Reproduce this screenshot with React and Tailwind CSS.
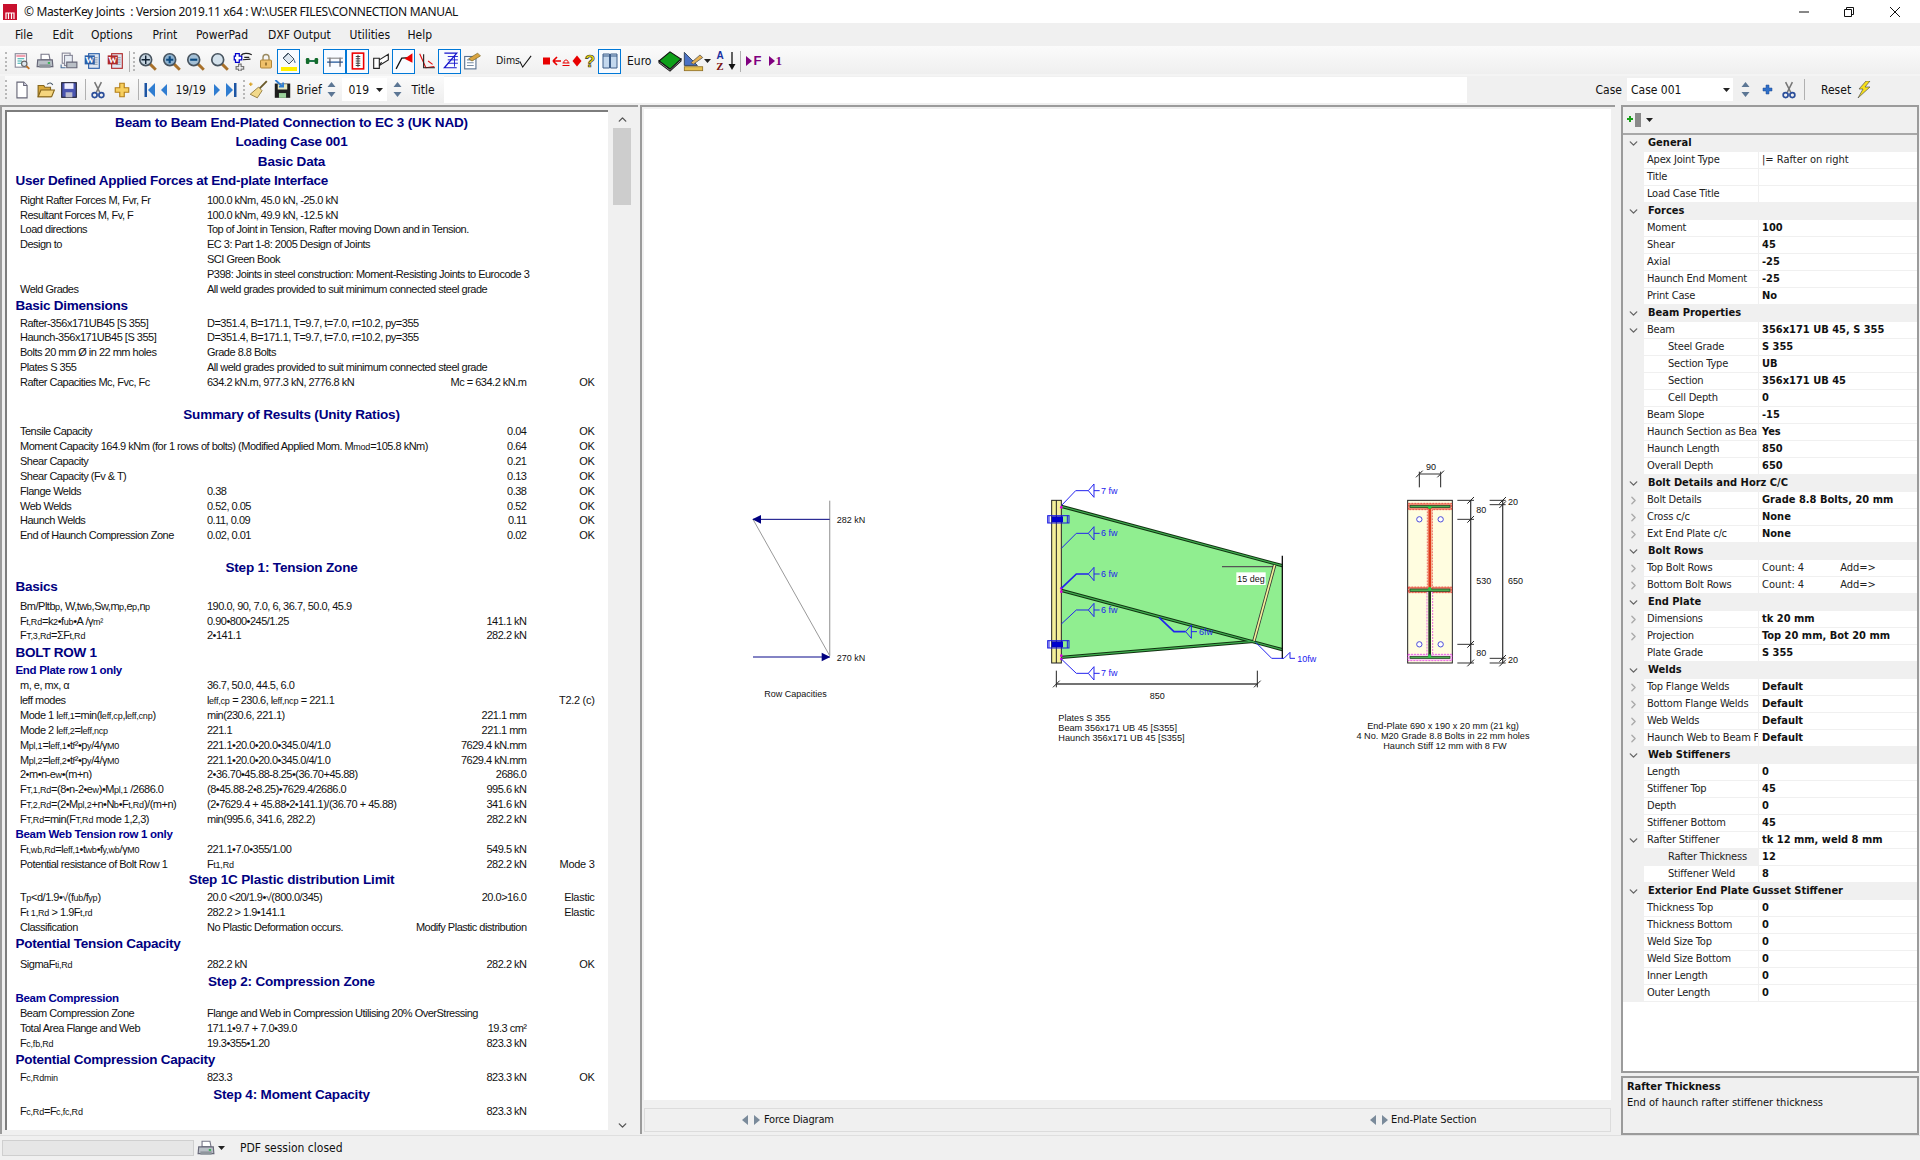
import { ChevronDown, ChevronRight, ChevronUp } from 'lucide-react';

const tahoma = "font-['DejaVu_Sans_Condensed','Noto_Sans',sans-serif]";
const arial = "font-['Liberation_Sans',Arial,sans-serif]";

// report rows: t centred title, h heading, s sub heading, r data row
const report = [
  ['t', 'Beam to Beam End-Plated Connection to EC 3 (UK NAD)'],
  ['t', 'Loading Case 001'],
  ['t', 'Basic Data'],
  ['h', 'User Defined Applied Forces at End-plate Interface'],
  ['r', 'Right Rafter Forces M, Fvr, Fr', '100.0 kNm, 45.0 kN, -25.0 kN', '', '', 'mt-[2px]'],
  ['r', 'Resultant Forces M, Fv, F', '100.0 kNm, 49.9 kN, -12.5 kN'],
  ['r', 'Load directions', 'Top of Joint in Tension, Rafter moving Down and in Tension.'],
  ['r', 'Design to', 'EC 3: Part 1-8: 2005 Design of Joints'],
  ['r', '', 'SCI Green Book'],
  ['r', '', 'P398: Joints in steel construction: Moment-Resisting Joints to Eurocode 3'],
  ['r', 'Weld Grades', 'All weld grades provided to suit minimum connected steel grade'],
  ['h', 'Basic Dimensions'],
  ['r', 'Rafter-356x171UB45 [S 355]', 'D=351.4, B=171.1, T=9.7, t=7.0, r=10.2, py=355'],
  ['r', 'Haunch-356x171UB45 [S 355]', 'D=351.4, B=171.1, T=9.7, t=7.0, r=10.2, py=355'],
  ['r', 'Bolts 20 mm Ø in 22 mm holes', 'Grade 8.8 Bolts'],
  ['r', 'Plates S 355', 'All weld grades provided to suit minimum connected steel grade'],
  ['r', 'Rafter Capacities Mc, Fvc, Fc', '634.2 kN.m,  977.3 kN,  2776.8 kN', 'Mc = 634.2 kN.m', 'OK'],
  ['t', 'Summary of Results (Unity Ratios)', 'mt-[15px]'],
  ['r', 'Tensile Capacity', '', '0.04', 'OK'],
  ['r', 'Moment Capacity 164.9 kNm (for 1 rows of bolts) (Modified Applied Mom.   M{mod}=105.8 kNm)', '', '0.64', 'OK'],
  ['r', 'Shear Capacity', '', '0.21', 'OK'],
  ['r', 'Shear Capacity (Fv & T)', '', '0.13', 'OK'],
  ['r', 'Flange Welds', '0.38', '0.38', 'OK'],
  ['r', 'Web Welds', '0.52, 0.05', '0.52', 'OK'],
  ['r', 'Haunch Welds', '0.11, 0.09', '0.11', 'OK'],
  ['r', 'End of Haunch Compression Zone', '0.02, 0.01', '0.02', 'OK'],
  ['t', 'Step 1: Tension Zone', 'mt-[15px]'],
  ['h', 'Basics'],
  ['r', 'Bm/Pltb{p}, W,tw{b},Sw,m{p},e{p},n{p}', '190.0, 90, 7.0, 6, 36.7, 50.0, 45.9', '', '', 'mt-[2px]'],
  ['r', 'F{t,Rd}=k{2}•f{ub}•A /γ{m²}', '0.90•800•245/1.25', '141.1 kN'],
  ['r', 'F{T,3,Rd}=ΣF{t,Rd}', '2•141.1', '282.2 kN'],
  ['h', 'BOLT ROW 1'],
  ['s', 'End Plate row 1 only', 'h-[16px]'],
  ['r', 'm, e, mx, α', '36.7, 50.0, 44.5, 6.0'],
  ['r', 'leff modes', 'l{eff,cp} = 230.6, l{eff,ncp} = 221.1', '', 'T2.2 (c)'],
  ['r', 'Mode 1 l{eff,1}=min(l{eff,cp},l{eff,cnp})', 'min(230.6, 221.1)', '221.1 mm'],
  ['r', 'Mode 2 l{eff,2}=l{eff,ncp}', '221.1', '221.1 mm'],
  ['r', 'M{pl,1}=l{eff,1}•t{f}²•p{y}/4/γ{M0}', '221.1•20.0•20.0•345.0/4/1.0', '7629.4 kN.mm'],
  ['r', 'M{pl,2}=l{eff,2}•t{f}²•p{y}/4/γ{M0}', '221.1•20.0•20.0•345.0/4/1.0', '7629.4 kN.mm'],
  ['r', '2•m•n-e{w}•(m+n)', '2•36.70•45.88-8.25•(36.70+45.88)', '2686.0'],
  ['r', 'F{T,1,Rd}=(8•n-2•e{w})•M{pl,1} /2686.0', '(8•45.88-2•8.25)•7629.4/2686.0', '995.6 kN'],
  ['r', 'F{T,2,Rd}=(2•M{pl,2}+n•N{b}•F{t,Rd})/(m+n)', '(2•7629.4 + 45.88•2•141.1)/(36.70 + 45.88)', '341.6 kN'],
  ['r', 'F{T,Rd}=min(F{T,Rd} mode 1,2,3)', 'min(995.6, 341.6, 282.2)', '282.2 kN'],
  ['s', 'Beam Web Tension row 1 only'],
  ['r', 'F{t,wb,Rd}=l{eff,1}•t{wb}•f{y,wb}/γ{M0}', '221.1•7.0•355/1.00', '549.5 kN'],
  ['r', 'Potential resistance of Bolt Row 1', 'F{t1,Rd}', '282.2 kN', 'Mode 3'],
  ['t', 'Step 1C Plastic distribution Limit', 'h-[18px]'],
  ['r', 'T{p}<d/1.9•√(f{ub}/f{yp})', '20.0 <20/1.9•√(800.0/345)', '20.0>16.0', 'Elastic', 'mt-[1px]'],
  ['r', 'F{t 1,Rd} > 1.9F{t,rd}', '282.2 > 1.9•141.1', '', 'Elastic'],
  ['r', 'Classification', 'No Plastic Deformation occurs.', 'Modify Plastic distribution'],
  ['h', 'Potential Tension Capacity'],
  ['r', 'SigmaF{ti,Rd}', '282.2 kN', '282.2 kN', 'OK', 'mt-[3px]'],
  ['t', 'Step 2: Compression Zone'],
  ['s', 'Beam Compression'],
  ['r', 'Beam Compression Zone', 'Flange and Web in Compression Utilising 20% OverStressing'],
  ['r', 'Total Area Flange and Web', '171.1•9.7 + 7.0•39.0', '19.3 cm²'],
  ['r', 'F{c,fb,Rd}', '19.3•355•1.20', '823.3 kN'],
  ['h', 'Potential Compression Capacity'],
  ['r', 'F{c,Rdmin}', '823.3', '823.3 kN', 'OK'],
  ['t', 'Step 4: Moment Capacity'],
  ['r', 'F{c,Rd}=F{c,fc,Rd}', '', '823.3 kN'],
];

// property grid rows: section / row, open = chevron state, sub = indented
const props = [
  { sec: 'General' },
  { l: 'Apex Joint Type', v: '|= Rafter on right', plain: true },
  { l: 'Title', v: '' },
  { l: 'Load Case Title', v: '' },
  { sec: 'Forces' },
  { l: 'Moment', v: '100' },
  { l: 'Shear', v: '45' },
  { l: 'Axial', v: '-25' },
  { l: 'Haunch End Moment', v: '-25' },
  { l: 'Print Case', v: 'No' },
  { sec: 'Beam Properties' },
  { l: 'Beam', v: '356x171 UB 45, S 355', open: true },
  { l: 'Steel Grade', v: 'S 355', sub: true },
  { l: 'Section Type', v: 'UB', sub: true },
  { l: 'Section', v: '356x171 UB 45', sub: true },
  { l: 'Cell Depth', v: '0', sub: true },
  { l: 'Beam Slope', v: '-15' },
  { l: 'Haunch Section as Bea', v: 'Yes' },
  { l: 'Haunch Length', v: '850' },
  { l: 'Overall Depth', v: '650' },
  { sec: 'Bolt Details and Horz C/C' },
  { l: 'Bolt Details', v: 'Grade 8.8 Bolts, 20 mm', closed: true },
  { l: 'Cross c/c', v: 'None', closed: true },
  { l: 'Ext End Plate c/c', v: 'None', closed: true },
  { sec: 'Bolt Rows' },
  { l: 'Top Bolt Rows', v: 'Count: 4', add: true, closed: true, plain: true },
  { l: 'Bottom Bolt Rows', v: 'Count: 4', add: true, closed: true, plain: true },
  { sec: 'End Plate' },
  { l: 'Dimensions', v: 'tk 20 mm', closed: true },
  { l: 'Projection', v: 'Top 20 mm, Bot 20 mm', closed: true },
  { l: 'Plate Grade', v: 'S 355' },
  { sec: 'Welds' },
  { l: 'Top Flange Welds', v: 'Default', closed: true },
  { l: 'Bottom Flange Welds', v: 'Default', closed: true },
  { l: 'Web Welds', v: 'Default', closed: true },
  { l: 'Haunch Web to Beam F', v: 'Default', closed: true },
  { sec: 'Web Stiffeners' },
  { l: 'Length', v: '0' },
  { l: 'Stiffener Top', v: '45' },
  { l: 'Depth', v: '0' },
  { l: 'Stiffener Bottom', v: '45' },
  { l: 'Rafter Stiffener', v: 'tk 12 mm, weld 8 mm', open: true },
  { l: 'Rafter Thickness', v: '12', sub: true, selected: true },
  { l: 'Stiffener Weld', v: '8', sub: true },
  { sec: 'Exterior End Plate Gusset Stiffener' },
  { l: 'Thickness Top', v: '0' },
  { l: 'Thickness Bottom', v: '0' },
  { l: 'Weld Size Top', v: '0' },
  { l: 'Weld Size Bottom', v: '0' },
  { l: 'Inner Length', v: '0' },
  { l: 'Outer Length', v: '0' },
];

const menus = [
  ['File', 'w-[37.5px]'],
  ['Edit', 'w-[38.5px]'],
  ['Options', 'w-[61.5px]'],
  ['Print', 'w-[43.5px]'],
  ['PowerPad', 'w-[72px]'],
  ['DXF Output', 'w-[81.5px]'],
  ['Utilities', 'w-[58px]'],
  ['Help', 'w-[40px]'],
];

// {..} marks the small subscript parts of a formula
function Rich({ text }) {
  return text.split(/(\{[^}]*\})/).map((p, i) =>
    p.startsWith('{') ? (
      <span key={i} className="text-[9px] tracking-[-0.2px]">{p.slice(1, -1)}</span>
    ) : (
      <span key={i}>{p}</span>
    )
  );
}

function ReportRow({ row }) {
  const [kind] = row;
  if (kind === 't') {
    return (
      <div className={`${row[2] || 'h-[19.6px]'} ${row[2]?.startsWith('mt') ? 'h-[19.6px]' : ''} w-[569px] flex items-center justify-center text-[13.5px] font-bold text-[#000080] tracking-[-0.17px] whitespace-nowrap`}>
        {row[1]}
      </div>
    );
  }
  if (kind === 'h') {
    return (
      <div className="h-[19px] pl-[8.5px] flex items-center text-[13.5px] font-bold text-[#000080] tracking-[-0.25px] whitespace-nowrap">
        {row[1]}
      </div>
    );
  }
  if (kind === 's') {
    return (
      <div className={`${row[2] || 'h-[15px]'} pl-[8.5px] flex items-center text-[11.5px] font-bold text-[#000090] tracking-[-0.3px] whitespace-nowrap`}>
        {row[1]}
      </div>
    );
  }
  const [, label, value, result, status, cls] = row;
  return (
    <div className={`h-[14.85px] flex items-center text-[11px] leading-none text-[#111] tracking-[-0.5px] whitespace-nowrap ${cls || ''}`}>
      <div className="w-[200px] pl-[13px]"><Rich text={label} /></div>
      <div className="w-[200px]"><Rich text={value} /></div>
      <div className="w-[119.5px] text-right"><Rich text={result || ''} /></div>
      <div className="w-[68px] text-right tracking-[-0.3px]">{status}</div>
    </div>
  );
}

function PropRow({ p }) {
  if (p.sec) {
    return (
      <div className="h-[17px] flex items-center bg-[#f0f0f0]">
        <div className="w-[21px] flex justify-center"><ChevronDown size={13} strokeWidth={2.5} className="text-[#666]" /></div>
        <div className="pl-[4px] text-[11px] font-bold text-[#111] whitespace-nowrap">{p.sec}</div>
      </div>
    );
  }
  return (
    <div className="h-[17px] flex text-[11px] text-[#222] border-b border-[#f0f0f0]">
      <div className="w-[21px] bg-[#f0f0f0] flex items-center justify-center">
        {p.open && <ChevronDown size={13} strokeWidth={2.5} className="text-[#666]" />}
        {p.closed && <ChevronRight size={13} strokeWidth={2.5} className="text-[#aaa]" />}
      </div>
      <div className={`w-[114px] flex items-center overflow-hidden whitespace-nowrap tracking-[-0.2px] ${p.sub ? 'pl-[24px]' : 'pl-[3px]'} ${p.selected ? 'bg-[#f0f0f0]' : ''}`}>
        {p.l}
      </div>
      <div className="flex-1 border-l border-[#f0f0f0] pl-[3px] flex items-center whitespace-nowrap">
        <span className={p.plain ? '' : 'font-bold text-[#111]'}>{p.v}</span>
        {p.add && <span className="ml-[36px]">Add=&gt;</span>}
      </div>
    </div>
  );
}

const Ic = ({ s = 18, children }) => (
  <svg width={s} height={s} viewBox="0 0 16 16">{children}</svg>
);

const Mag = ({ children, lens = '#c5d4e0' }) => (
  <Ic s={19}>
    <path d="M10 10l5 5" stroke="#a8702a" strokeWidth="2.4" />
    <circle cx="6.5" cy="6.5" r="5" fill={lens} stroke="#47535e" strokeWidth="1.4" />
    {children}
  </Ic>
);

const Preview = () => (
  <Ic>
    <rect x="2" y="1.5" width="10" height="12" fill="#fff" stroke="#8a8a9a" />
    <rect x="3" y="2.5" width="8" height="2" fill="#f0a0b0" />
    <path d="M4 6h6M4 8h4M4 10h4" stroke="#3aa" />
    <circle cx="10" cy="10.5" r="2.4" fill="#dfe8f0" stroke="#666" />
    <path d="M12 12.5l2.5 2.5" stroke="#c07020" strokeWidth="1.6" />
  </Ic>
);
const Printer = () => (
  <Ic>
    <path d="M4.5 7V2h7l1 5z" fill="#fff" stroke="#778" />
    <path d="M1.5 7h13l.5 6H1z" fill="#b9bfc6" stroke="#667" />
    <rect x="3" y="11" width="10" height="3" fill="#8e959c" />
    <rect x="10.5" y="9" width="2" height="1.5" fill="#2bb34a" />
  </Ic>
);
const Copies = () => (
  <Ic>
    <rect x="2" y="1" width="7" height="9" fill="#fff" stroke="#889" />
    <rect x="4" y="3" width="7" height="9" fill="#e9eef5" stroke="#889" />
    <path d="M6 9h9v5H6z" fill="#b9bfc6" stroke="#667" />
    <path d="M1 11v3h4" fill="none" stroke="#4a6f9a" />
  </Ic>
);
const WordDoc = ({ c }) => (
  <Ic>
    <rect x="5" y="1.5" width="9.5" height="13" fill="#dfe7f2" stroke={c} />
    <path d="M9 5h4M9 7h4M9 9h4M9 11h4" stroke="#9ab" />
    <rect x="1.5" y="3" width="9" height="8" fill={c} />
    <text x="6" y="10" textAnchor="middle" fontSize="8" fontWeight="bold" fill="#fff" fontFamily="Liberation Serif">W</text>
  </Ic>
);
const Lock = () => (
  <Ic s={16}>
    <path d="M5 7V4.5a3 3 0 016 0V7" fill="none" stroke="#9a8a60" strokeWidth="1.4" />
    <rect x="2.5" y="7" width="11" height="8" rx="1" fill="#efc06a" stroke="#b0863a" />
    <rect x="7.4" y="9.5" width="1.2" height="3" fill="#6a4a10" />
  </Ic>
);
const Bucket = () => (
  <div className="flex flex-col items-center">
    <Ic s={16}>
      <path d="M7 2l6 6-5 5-6-6z" fill="#dce6f0" stroke="#456" />
      <path d="M2.5 7L8 2" stroke="#456" />
      <path d="M13 8c1 2 2 3 1.5 4-1 .5-2-1-1.5-4z" fill="#5c7fa8" />
    </Ic>
    <div className="w-[16px] h-[4px] bg-[#ffef00]" />
  </div>
);
const Dumbbell = () => (
  <Ic s={14}>
    <path d="M4 8h8" stroke="#063" strokeWidth="2" />
    <rect x="1" y="4.5" width="4" height="7" rx="1.5" fill="#136b2b" />
    <rect x="11" y="4.5" width="4" height="7" rx="1.5" fill="#136b2b" />
  </Ic>
);
const Span = () => (
  <Ic>
    <path d="M1 9h14" stroke="#2b5f9e" strokeWidth="1.2" />
    <path d="M3.5 5v8M12.5 5v8" stroke="#445" />
    <path d="M1 5.5h14" stroke="#888" />
  </Ic>
);
const RedBox = () => (
  <Ic>
    <rect x="3" y="1" width="10" height="14" fill="#fff" stroke="#e00" strokeWidth="1.4" />
    <path d="M8 2.5v11M6 4h4M6 6h4M6 8h4M6 10h4M6 12h4" stroke="#333" strokeWidth=".8" />
  </Ic>
);
const Flap = () => (
  <Ic>
    <path d="M1.5 5.5h5v9h-5zM6.5 7l8-5v5l-8 5z" fill="#fff" stroke="#222" />
    <path d="M6.5 12l2-3" stroke="#222" />
  </Ic>
);
const Apex = () => (
  <Ic>
    <path d="M1 15L6 5.5 14 5" fill="none" stroke="#111" strokeWidth="1.1" />
    <path d="M15.5 1v8.5L8.5 6z" fill="#ee0000" />
  </Ic>
);
const Angle = () => (
  <Ic>
    <path d="M1.5 1.5L7 14l7.5-1" fill="none" stroke="#e01010" />
    <path d="M5 2v12h10" fill="none" stroke="#222" />
    <path d="M9 8l4 3" stroke="#e01010" />
  </Ic>
);
const Stairs = () => (
  <Ic>
    <path d="M3 1h11L3 14h11" fill="none" stroke="#1515cc" strokeWidth="1.1" />
    <path d="M6 4h9M6 7h9M6 10h9M12 3v10" stroke="#1515cc" strokeWidth=".8" />
  </Ic>
);
const Pencils = () => (
  <Ic>
    <rect x="1.5" y="4" width="10" height="11" fill="#fff" stroke="#5a7290" />
    <path d="M3.5 7h6M3.5 9.5h6M3.5 12h6" stroke="#7a8ea5" />
    <path d="M5 6l8-5 2.5 2.5L8 8z" fill="#d9a441" stroke="#7a6420" strokeWidth=".6" />
  </Ic>
);
const Hand = () => (
  <Ic s={20}>
    <path d="M2 2h3v2h2v3H5v2H2V7H1V4h1z" fill="#fff" stroke="#0000cc" />
    <path d="M6.5 3.5C8 1.5 12 1.5 15 3M8 7l6-.5M9 5h4" fill="none" stroke="#222" />
    <path d="M4.5 10.5h2v2h2v2h-2v1.5h-2V14.5h-2v-2h2z" fill="#fff" stroke="#777" />
  </Ic>
);
const Check = () => (
  <Ic s={15}>
    <path d="M2 8l3 6 9-12" fill="none" stroke="#111" strokeWidth="1.1" />
  </Ic>
);
const RedSet = () => (
  <svg width="40" height="16" viewBox="0 0 40 16">
    <rect x="1" y="4.5" width="7" height="7" fill="#e80000" />
    <path d="M11 8h8M11 8l4-4M11 8l4 4" stroke="#e80000" strokeWidth="1.7" fill="none" />
    <path d="M20.5 12.5h7M20.5 10h7M22 10c-1-4 5-4 4 0" stroke="#e80000" fill="none" />
    <path d="M35 2.5l4.5 5.5-4.5 5.5L30.5 8z" fill="#e80000" />
  </svg>
);
const Book = () => (
  <svg width="24" height="22" viewBox="0 0 26 24">
    <path d="M1 12L13 2l12 8-12 11z" fill="#0fa01a" stroke="#111" strokeWidth="1.1" />
    <path d="M1 12v2l12 9 12-11v-2L13 21z" fill="#ddd" stroke="#111" strokeWidth="1.1" />
  </svg>
);
const SetSquare = () => (
  <Ic s={21}>
    <path d="M1 1v10h10z" fill="#4c72c4" stroke="#234" strokeWidth=".6" />
    <path d="M6 9l7-6 2 2-7 5z" fill="#e6b04f" stroke="#555" strokeWidth=".6" />
    <rect x="1" y="12" width="14" height="3" fill="#e6c04f" stroke="#8a6a20" strokeWidth=".6" />
  </Ic>
);
const Caret = () => (
  <svg width="7" height="4" viewBox="0 0 7 4"><path d="M0 0h7L3.5 4z" fill="#222" /></svg>
);
const AZ = () => (
  <svg width="26" height="22" viewBox="0 0 26 22">
    <text x="7" y="9" textAnchor="middle" fontSize="10" fontWeight="bold" fill="#1a2fa0" fontFamily="Liberation Sans">A</text>
    <text x="7" y="20" textAnchor="middle" fontSize="11" fontWeight="bold" fill="#7a1010" fontFamily="Liberation Serif">Z</text>
    <path d="M19 2v14" stroke="#111" strokeWidth="1.3" />
    <path d="M15.5 14h7L19 20z" fill="#111" />
  </svg>
);
const Tri = ({ c = '#800080', flip }) => (
  <svg width="6" height="10" viewBox="0 0 6 10">
    <path d={flip ? 'M6 0v10L0 5z' : 'M0 0v10l6-5z'} fill={c} />
  </svg>
);
const NewDoc = () => (
  <Ic>
    <path d="M3.5 1h6l3 3v11h-9z" fill="#fff" stroke="#667" />
    <path d="M9.5 1v3h3" fill="#dde" stroke="#667" />
  </Ic>
);
const OpenDoc = () => (
  <Ic>
    <path d="M1 4h5l1 1.5h5V14H1z" fill="#d9a93c" stroke="#86661c" />
    <path d="M1 14l2.5-6h12L13 14z" fill="#f5d57e" stroke="#86661c" />
    <path d="M9 3c2-2 4-1.5 5 .5" fill="none" stroke="#456" />
  </Ic>
);
const Floppy = ({ c = '#4a55b0' }) => (
  <Ic>
    <rect x="1.5" y="1.5" width="13" height="13" fill={c} stroke="#223" />
    <rect x="4" y="2" width="8" height="5" fill="#eef" />
    <rect x="5" y="10" width="6" height="4.5" fill="#bbc" />
  </Ic>
);
const Scissors = () => (
  <Ic>
    <path d="M5 1l4.5 9M11 1L6.5 10" stroke="#777" strokeWidth="1.4" />
    <circle cx="5" cy="12.5" r="2.2" fill="none" stroke="#2b4e9a" strokeWidth="1.5" />
    <circle cx="11" cy="12.5" r="2.2" fill="none" stroke="#2b4e9a" strokeWidth="1.5" />
  </Ic>
);
const GoldPlus = () => (
  <Ic>
    <path d="M6 2h4v4h4v4h-4v4H6v-4H2V6h4z" fill="#f7cf5f" stroke="#b47f1a" />
  </Ic>
);
const Edge = ({ flip }) => (
  <svg width="11" height="16" viewBox="0 0 11 16">
    {flip ? (
      <>
        <path d="M0 1l7 7-7 7z" fill="#2f7dd1" />
        <rect x="8" y="1" width="2.5" height="14" fill="#1d55a3" />
      </>
    ) : (
      <>
        <rect x=".5" y="1" width="2.5" height="14" fill="#1d55a3" />
        <path d="M11 1L4 8l7 7z" fill="#2f7dd1" />
      </>
    )}
  </svg>
);
const Step = ({ flip }) => (
  <svg width="8" height="14" viewBox="0 0 8 14">
    <path d={flip ? 'M1 1l6 6-6 6z' : 'M7 1L1 7l6 6z'} fill="#2f7dd1" />
  </svg>
);
const Broom = () => (
  <Ic s={19}>
    <path d="M15 1L9 7" stroke="#6a5a2a" strokeWidth="1.6" />
    <path d="M8 6l3 3-4 6-6-3z" fill="#f2d98a" stroke="#8a7030" strokeWidth=".7" />
    <path d="M1.5 2v3M0 3.5h3" stroke="#d8a020" />
  </Ic>
);
const SaveDown = () => (
  <Ic s={19}>
    <rect x="1.5" y="3" width="13" height="12" fill="#1d1d1d" />
    <rect x="4" y="3.5" width="8" height="4.5" fill="#e8e8c0" />
    <rect x="5" y="11" width="6" height="4" fill="#9ad09a" />
    <path d="M2 0l6 5.5M5 5.5h3.5V2" stroke="#2f7dd1" strokeWidth="1.5" fill="none" />
  </Ic>
);
const Spin = () => (
  <svg width="9" height="15" viewBox="0 0 9 15">
    <path d="M4.5 0l4 5h-8zM.5 10h8l-4 5z" fill="#5c7694" />
  </svg>
);
const Bolt = () => (
  <svg width="15" height="17" viewBox="0 0 15 17">
    <path d="M9 0L2 8h4L1 17l12-11H8l5-6z" fill="#f7e018" stroke="#555" strokeWidth=".7" />
  </svg>
);

const T = ({ w, ml = '', box, children }) => (
  <div className={`${w} ${ml} h-[25px] shrink-0 flex items-center justify-center ${box ? 'border border-[#0078d7] bg-[#f8fbff]' : ''}`}>
    {children}
  </div>
);
const Grip = () => <div className="w-[2px] h-[19px] shrink-0 border-l-2 border-dotted border-[#b8b8b8]" />;
const Sep = ({ ml = '', mr = '' }) => <div className={`w-px h-[21px] shrink-0 bg-[#b0b0b0] ${ml} ${mr}`} />;

function Toolbars() {
  return (
    <>
      <div className="h-[23px] flex items-center pt-[1px] text-[12px] text-[#111]">
        <div className="w-[15px]" />
        {menus.map(([m, w]) => (
          <div key={m} className={w}>{m}</div>
        ))}
      </div>
      <div className="h-[28px] flex items-center pl-[5px] pt-[2px] bg-gradient-to-b from-[#fbfbfb] to-[#efefef]">
        <Grip />
        <T w="w-[23px]" ml="ml-[3.5px]"><Preview /></T>
        <T w="w-[23px]"><Printer /></T>
        <T w="w-[24px]"><Copies /></T>
        <T w="w-[23px]"><WordDoc c="#2b5fa8" /></T>
        <T w="w-[23px]"><WordDoc c="#b02a2a" /></T>
        <Sep ml="ml-[2px]" />
        <div className="ml-[3px]"><Grip /></div>
        <T w="w-[24px]" ml="ml-[0.5px]">
          <Mag>
            <path d="M6.5 3v7M3 6.5h7" stroke="#123" strokeWidth="1.2" />
          </Mag>
        </T>
        <T w="w-[24px]">
          <Mag lens="#8fb3d0">
            <path d="M6.5 3.5v6M3.5 6.5h6" stroke="#0d4a80" strokeWidth="1.8" />
          </Mag>
        </T>
        <T w="w-[24px]">
          <Mag lens="#a4c0d6">
            <path d="M3.5 6.5h6" stroke="#0d4a80" strokeWidth="1.8" />
          </Mag>
        </T>
        <T w="w-[24px]"><Mag lens="#d4e2ec" /></T>
        <T w="w-[24px]"><Hand /></T>
        <T w="w-[21px]"><Lock /></T>
        <T w="w-[23px]" ml="ml-[1px]" box><Bucket /></T>
        <T w="w-[23px]"><Dumbbell /></T>
        <T w="w-[23px]" box><Span /></T>
        <T w="w-[23px]" box><RedBox /></T>
        <T w="w-[23px]"><Flap /></T>
        <T w="w-[23px]" box><Apex /></T>
        <T w="w-[23px]"><Angle /></T>
        <T w="w-[23px]" box><Stairs /></T>
        <T w="w-[22px]"><Pencils /></T>
        <div className="ml-[13px] w-[20px] text-[10.5px] text-[#111]">Dims</div>
        <T w="w-[19px]"><Check /></T>
        <T w="w-[40px]" ml="ml-[7px]"><RedSet /></T>
        <div className="w-[16px] text-center text-[17px] leading-none font-bold text-[#f5e400] [-webkit-text-stroke:0.7px_#333] font-['Liberation_Sans']">?</div>
        <T w="w-[23px]" box>
          <svg width="16" height="18" viewBox="0 0 16 18">
            <path d="M1 2h6.5v14H1zM8.5 2H15v14H8.5z" fill="#c4d8ee" stroke="#3c5c88" />
            <path d="M1 4h6.5M8.5 4H15" stroke="#3c5c88" />
          </svg>
        </T>
        <div className="ml-[6px] w-[31px] text-[12px] text-[#111]">Euro</div>
        <T w="w-[24px]"><Book /></T>
        <T w="w-[21px]" ml="ml-[0.5px]"><SetSquare /></T>
        <Caret />
        <T w="w-[26px]" ml="ml-[2px]"><AZ /></T>
        <Sep ml="ml-[1px]" />
        <div className="ml-[5px]"><Tri /></div>
        <div className="ml-[2px] w-[15px] text-[13px] font-bold text-[#800080] font-['Liberation_Sans']">F</div>
        <Tri />
        <div className="ml-[1px] text-[13px] font-bold text-[#800080] font-['Liberation_Serif']">1</div>
      </div>
      <div className="h-[2px] bg-[#f4f4f4]" />
      <div className="h-[27px] flex items-center pl-[5px] text-[12px] text-[#111] bg-[#f0f0f0]">
        <div className="flex items-center h-full w-[439px] bg-gradient-to-b from-[#fbfbfb] to-[#eeeeee]">
          <Grip />
          <T w="w-[23px]" ml="ml-[3.5px]"><NewDoc /></T>
          <T w="w-[24px]"><OpenDoc /></T>
          <T w="w-[23px]"><Floppy /></T>
          <Sep ml="ml-[4px]" />
          <T w="w-[24px]"><Scissors /></T>
          <T w="w-[24px]"><GoldPlus /></T>
          <Sep ml="ml-[4px]" />
          <T w="w-[14px]" ml="ml-[4px]"><Edge /></T>
          <T w="w-[14px]"><Step /></T>
          <div className="ml-[5px] w-[34px] text-[12px] tracking-[-0.2px]">19/19</div>
          <T w="w-[14px]"><Step flip /></T>
          <T w="w-[15px]"><Edge flip /></T>
          <div className="ml-[4px]"><Grip /></div>
          <T w="w-[24px]" ml="ml-[2px]"><Broom /></T>
          <T w="w-[24px]"><SaveDown /></T>
          <div className="ml-[2px] w-[28px]">Brief</div>
          <T w="w-[14px]"><Spin /></T>
          <div className="ml-[3px] w-[45px] h-[23px] bg-white flex items-center pl-[7px] justify-between pr-[4px]">
            019
            <Caret />
          </div>
          <T w="w-[22px]"><Spin /></T>
          <div className="ml-[3px]">Title</div>
        </div>
        <div className="w-[1023px] h-[26px] bg-white" />
        <div className="flex-1 flex items-center h-full">
          <div className="w-[160px] text-right pr-[5px]">Case</div>
          <div className="w-[106px] h-[23px] bg-white flex items-center justify-between pl-[4px] pr-[3px]">
            Case 001
            <Caret />
          </div>
          <T w="w-[24px]"><Spin /></T>
          <T w="w-[20px]">
            <svg width="11" height="11" viewBox="0 0 11 11"><path d="M4 1h3v3h3v3H7v3H4V7H1V4h3z" fill="#2f6fc8" stroke="#1d4a90" strokeWidth=".5" /></svg>
          </T>
          <T w="w-[24px]"><Scissors /></T>
          <Sep ml="ml-[3px]" />
          <div className="ml-[16px] w-[36px]">Reset</div>
          <Bolt />
        </div>
      </div>
    </>
  );
}

// all three drawings are laid out in the reference's crop coordinates (3x)
function Weld({ from, mid, tip, y, x, label, thick }) {
  return (
    <g stroke="#2222ee" strokeWidth={thick ? 5 : 3} fill="none">
      <polyline points={`${from} ${mid},${y} ${tip},${y}`} />
      <path d={`M${tip} ${y}L${tip + 17} ${y - 20}V${y + 20}Z`} strokeWidth="3" />
      <path d={`M${tip + 17} ${y}H${tip + 34}`} strokeWidth="3" />
      <text x={x} y={y + 9} stroke="none" fill="#2222ee" fontSize="27">{label}</text>
    </g>
  );
}

function Tick({ x, y, dir = 1 }) {
  return <line x1={x - 10} y1={y + 10 * dir} x2={x + 10} y2={y - 10 * dir} stroke="#222" strokeWidth="3" />;
}

function Diagram() {
  return (
    <svg width="967" height="991" viewBox="645 110 967 991" className="block" fontFamily="Liberation Sans, Arial, sans-serif">
      {/* force diagram */}
      <g transform="translate(740 500) scale(0.33333)">
        <path d="M272 5V470" stroke="#aaa" strokeWidth="4" />
        <path d="M42 61L272 470" stroke="#999" strokeWidth="3" />
        <path d="M42 61H272" stroke="#000080" strokeWidth="3" />
        <path d="M40 61L66 48V74Z" fill="#000080" />
        <path d="M42 474H272" stroke="#5a5ab0" strokeWidth="4" />
        <path d="M274 474L248 461V487Z" fill="#000080" />
        <text x="293" y="71" fontSize="27" fill="#111">282 kN</text>
        <text x="293" y="485" fontSize="27" fill="#111">270 kN</text>
        <text x="76" y="594" fontSize="27" fill="#111">Row Capacities</text>
      </g>
      {/* beam elevation */}
      <g transform="translate(1000 440) scale(0.33333)">
        <path d="M187 200L850 378V630L765 607L187 652Z" fill="#90ee90" />
        <path d="M187 202L850 380M187 454L850 632M187 655L765 607" stroke="#113311" strokeWidth="10" />
        <path d="M187 202L850 380M187 454L850 632M187 655L765 607" stroke="#3fae4f" strokeWidth="3.5" />
        <path d="M850 350V660" stroke="#111" strokeWidth="4" />
        <path d="M669 383H830" stroke="#555" strokeWidth="4" />
        <path d="M827 378L765 605" stroke="#333" strokeWidth="10" />
        <path d="M827 378L765 605" stroke="#f5f09a" strokeWidth="5" />
        <rect x="712" y="400" width="88" height="38" fill="#fff" />
        <text x="756" y="429" textAnchor="middle" fontSize="27" fill="#111">15 deg</text>
        <rect x="158" y="184" width="29" height="488" fill="#f5f09a" stroke="#222" strokeWidth="3" />
        <path d="M172 184V672" stroke="#222" strokeWidth="3" />
        {[241, 616].map((y) => (
          <g key={y}>
            <rect x="146" y={y - 11} width="64" height="22" fill="none" stroke="#1a1ae0" strokeWidth="3" />
            <rect x="158" y={y - 9} width="34" height="18" fill="#0000cc" />
            <path d={`M150 ${y - 11}V${y + 11}M205 ${y - 11}V${y + 11}`} stroke="#1a1ae0" strokeWidth="3" />
          </g>
        ))}
        {[205, 448, 458, 650, 660].map((y) => (
          <circle key={y} cx="187" cy={y} r="4" fill="#e000e0" />
        ))}
        <Weld from="187,200" mid={230} tip={268} y={155} x={306} label="7 fw" />
        <Weld from="187,328" mid={232} tip={268} y={283} x={306} label="6 fw" />
        <Weld from="187,448" mid={232} tip={268} y={405} x={306} label="6 fw" thick />
        <Weld from="187,555" mid={232} tip={268} y={513} x={306} label="6 fw" />
        <Weld from="480,535" mid={525} tip={560} y={578} x={600} label="6fw" thick />
        <Weld from="187,660" mid={232} tip={268} y={703} x={306} label="7 fw" />
        <g stroke="#2222ee" strokeWidth="3" fill="none">
          <polyline points="770,610 818,658 855,658" />
          <path d="M855 658L873 640V658M873 658H888" />
          <text x="895" y="668" stroke="none" fill="#2222ee" fontSize="27">10fw</text>
        </g>
        <path d="M172 695V745M775 695V745" stroke="#222" strokeWidth="3" />
        <path d="M172 735H775" stroke="#444" strokeWidth="4" />
        <Tick x={172} y={735} />
        <Tick x={775} y={735} />
        <text x="475" y="780" textAnchor="middle" fontSize="27" fill="#111">850</text>
        <text x="178" y="845" fontSize="27.5" fill="#111">Plates S 355</text>
        <text x="178" y="875" fontSize="27.5" fill="#111">Beam 356x171 UB 45 [S355]</text>
        <text x="178" y="907" fontSize="27.5" fill="#111">Haunch 356x171 UB 45 [S355]</text>
      </g>
      {/* end plate section */}
      <g transform="translate(1340 440) scale(0.33333)">
        <rect x="206" y="184" width="134" height="488" fill="#fffde0" stroke="#222" strokeWidth="3" />
        <rect x="208" y="193" width="130" height="19" fill="#f08a70" stroke="#e02020" strokeWidth="2" strokeDasharray="6 3" />
        <rect x="208" y="444" width="130" height="17" fill="#f08a70" stroke="#e02020" strokeWidth="2" strokeDasharray="6 3" />
        <rect x="265" y="208" width="15" height="240" fill="#fffde0" stroke="#e02020" strokeWidth="2" strokeDasharray="6 3" />
        <rect x="268" y="206" width="9" height="244" fill="#e03a1a" />
        <rect x="207" y="646" width="132" height="19" fill="#f8d0f0" stroke="#e020e0" strokeWidth="2" strokeDasharray="6 3" />
        <rect x="264" y="458" width="17" height="190" fill="#fffde0" stroke="#e020e0" strokeWidth="2" strokeDasharray="6 3" />
        <rect x="268" y="452" width="8" height="198" fill="#1d3a1d" />
        {[199, 450, 652].map((y) => (
          <rect key={y} x="213" y={y} width="120" height="7" fill="#4caf50" stroke="#1d3a1d" strokeWidth="2" />
        ))}
        {[[272, 205], [272, 449], [272, 651]].map(([x, y]) => (
          <circle key={y} cx={x} cy={y} r="5" fill="#22cc44" />
        ))}
        {[[241, 241], [305, 241], [241, 616], [305, 616]].map(([x, y]) => (
          <circle key={`${x}${y}`} cx={x} cy={y} r="8" fill="#fff" stroke="#4a4ad8" strokeWidth="3" />
        ))}
        <path d="M241 98V145M305 98V145" stroke="#222" strokeWidth="3" />
        <path d="M241 105H305" stroke="#666" strokeWidth="4" />
        <Tick x={241} y={105} />
        <Tick x={305} y={105} />
        <text x="276" y="94" textAnchor="middle" fontSize="27" fill="#111">90</text>
        <path d="M395 184V672" stroke="#444" strokeWidth="4" />
        <path d="M355 184H405M355 241H405M355 616H405M355 672H405" stroke="#333" strokeWidth="3" />
        {[184, 241, 616, 672].map((y) => <Tick key={y} x={395} y={y} />)}
        <path d="M491 184V672" stroke="#444" strokeWidth="4" />
        <path d="M452 184H500M452 197H500M452 658H500M452 672H500" stroke="#333" strokeWidth="3" />
        {[184, 197, 658, 672].map((y) => <Tick key={y} x={491} y={y} />)}
        <g fontSize="27" fill="#111">
          <text x="412" y="223">80</text>
          <text x="412" y="436">530</text>
          <text x="412" y="652">80</text>
          <text x="507" y="199">20</text>
          <text x="507" y="436">650</text>
          <text x="507" y="673">20</text>
        </g>
        <g fontSize="27.5" fill="#111" textAnchor="middle">
          <text x="312" y="869">End-Plate 690 x 190 x 20 mm (21 kg)</text>
          <text x="312" y="899">4 No. M20 Grade 8.8 Bolts in 22 mm holes</text>
          <text x="318" y="931">Haunch Stiff 12 mm with 8 FW</text>
        </g>
      </g>
    </svg>
  );
}

export default function App() {
  return (
    <div className={`w-[1920px] h-[1160px] flex flex-col overflow-hidden bg-[#f0f0f0] ${tahoma}`}>
      {/* title bar */}
      <div className="h-[23px] bg-white flex items-center pl-[3px]">
        <svg width="14" height="16" viewBox="0 0 14 16">
          <rect width="14" height="16" fill="#c8102e" />
          <path d="M3 15V9h8v6M5.5 9v6M8.5 9v6" stroke="#fff" strokeWidth="1.2" fill="none" />
        </svg>
        <div className="ml-[7px] text-[12px] tracking-[-0.34px] text-[#111] font-['Noto_Sans',sans-serif] whitespace-pre">© MasterKey Joints  : Version 2019.11 x64 : W:\USER FILES\CONNECTION MANUAL</div>
        <div className="ml-auto flex items-center">
          <svg width="12" height="12" viewBox="0 0 12 12" className="mr-[33px]"><path d="M1 6h10" stroke="#111" /></svg>
          <svg width="12" height="12" viewBox="0 0 12 12" className="mr-[34px]"><path d="M1.5 3.5h7v7h-7zM3.5 3.5v-2h7v7h-2" fill="none" stroke="#111" /></svg>
          <svg width="12" height="12" viewBox="0 0 12 12" className="mr-[19px]"><path d="M1 1l10 10M11 1L1 11" stroke="#111" /></svg>
        </div>
      </div>
      <Toolbars />

      {/* main panes */}
      <div className="h-[1032px] flex pt-[2px]">
        {/* report */}
        <div className={`w-[638px] h-[1029px] border-l-2 border-t-2 border-[#9b9b9b] pl-[3px] pt-[3px] flex ${arial}`}>
          <div className="w-[603px] h-[1020px] border-l-2 border-t-2 border-[#7d7d7d] bg-white pt-[1px] overflow-hidden">
            {report.map((r, i) => (
              <ReportRow key={i} row={r} />
            ))}
          </div>
          <div className="ml-[5px] w-[18px] h-[1023px] flex flex-col items-center pt-[3px]">
            <ChevronUp size={13} strokeWidth={2.5} className="text-[#555]" />
            <div className="mt-[2px] w-[18px] h-[77px] bg-[#cdcdcd]" />
            <ChevronDown size={13} strokeWidth={2.5} className="text-[#555] mt-auto mb-[1px]" />
          </div>
        </div>

        {/* drawing */}
        <div className="ml-[2px] w-[975px] h-[1029px] border-l-2 border-t-2 border-[#9b9b9b] flex flex-col pl-[2px] pt-[2px]">
          <div className="w-[967px] h-[991px] bg-white">
            <Diagram />
          </div>
          <div className="mt-[8px] w-[967px] h-[24px] border border-[#dcdcdc] flex items-center text-[11px] text-[#111]">
            <div className="ml-[97px] flex items-center gap-[6px]">
              <Tri c="#7a8a9a" flip />
              <Tri c="#7a8a9a" />
            </div>
            <div className="ml-[4px] w-[606px] tracking-[-0.2px]">Force Diagram</div>
            <div className="flex items-center gap-[6px]">
              <Tri c="#7a8a9a" flip />
              <Tri c="#7a8a9a" />
            </div>
            <div className="ml-[3px] tracking-[-0.1px]">End-Plate Section</div>
          </div>
        </div>

        {/* property grid */}
        <div className="ml-[6px] w-[298px] flex flex-col">
          <div className="h-[968px] border-2 border-[#9b9b9b] bg-white flex flex-col">
            <div className="h-[28px] shrink-0 bg-[#f0f0f0] border-b-2 border-[#a8a8a8] flex items-center pl-[4px] gap-[3px]">
              <svg width="16" height="14" viewBox="0 0 16 14">
                <path d="M3 3v6M0 6h6" stroke="#18a018" strokeWidth="2" />
                <path d="M8 1h6M8 3h6M8 5h6M8 7h6M8 9h6M8 11h6M8 13h6" stroke="#222" />
              </svg>
              <Caret />
            </div>
            <div>
              {props.map((p, i) => (
                <PropRow key={i} p={p} />
              ))}
            </div>
          </div>
          <div className="mt-[3px] h-[59px] border-2 border-[#9b9b9b] pl-[4px] pt-[1px] text-[11px] text-[#111] leading-[16px]">
            <div className="font-bold">Rafter Thickness</div>
            <div>End of haunch rafter stiffener thickness</div>
          </div>
        </div>
      </div>

      {/* status bar */}
      <div className="flex-1 flex items-center border-t border-[#dfdfdf] pl-[2px] text-[12px] text-[#111]">
        <div className="w-[192px] h-[16px] bg-[#e6e6e6] border border-[#cfcfcf]" />
        <div className="ml-[3px]"><Printer /></div>
        <div className="ml-[3px]"><Caret /></div>
        <div className="ml-[15px]">PDF session closed</div>
      </div>
    </div>
  );
}
